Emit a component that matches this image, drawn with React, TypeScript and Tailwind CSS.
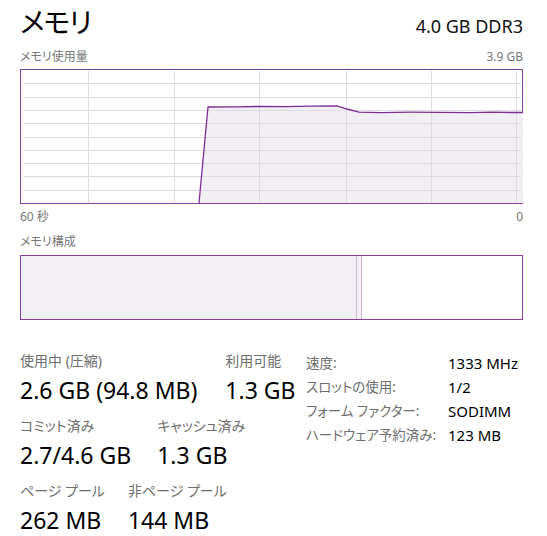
import React from 'react';

// chart inner size (inside the 1px border)
const W = 502;
const H = 133;

const vLines = [67, 153, 238, 325, 410, 495];
const hLines = [1, 2, 3, 4, 5, 6, 7, 8, 9].map((k) => Math.round((k * H) / 10) + 0.5);

const usage: [number, number][] = [
  [178, 133],
  [187, 37],
  [215, 36.8],
  [240, 36.4],
  [265, 36.6],
  [290, 36.2],
  [316, 36],
  [326, 39],
  [338, 42.2],
  [360, 42.6],
  [390, 42.2],
  [420, 42.4],
  [450, 42.6],
  [470, 42.2],
  [490, 42.5],
  [502, 42.5],
];

const UsageChart: React.FC = () => {
  const line = usage.map(([x, y]) => `${x},${y}`).join(' ');
  const fill = `${line} ${W},${H}`;
  return (
    <svg width={W} height={H} viewBox={`0 0 ${W} ${H}`} className="block">
      <polygon points={fill} fill="#f1eff4" />
      {hLines.map((y) => (
        <line key={`h${y}`} x1={2} x2={W - 2} y1={y} y2={y} stroke="#dedae2" strokeWidth={1} />
      ))}
      {vLines.map((x) => (
        <line key={`v${x}`} x1={x + 0.5} x2={x + 0.5} y1={0} y2={H} stroke="#dedae2" strokeWidth={1} />
      ))}
      <polyline points={line} fill="none" stroke="#7f2d96" strokeWidth={1.3} />
    </svg>
  );
};

const Stat: React.FC<{ label: string; value: string }> = ({ label, value }) => (
  <div className="flex flex-col">
    <div className="h-[20px] whitespace-nowrap text-[14px] leading-[20px] text-[#6e6e6e]">{label}</div>
    <div className="mt-[4px] h-[30px] whitespace-nowrap text-[23px] leading-[30px] text-black">{value}</div>
  </div>
);

const details = [
  ['速度:', '1333 MHz'],
  ['スロットの使用:', '1/2'],
  ['フォーム ファクター:', 'SODIMM'],
  ['ハードウェア予約済み:', '123 MB'],
];

export default function App() {
  return (
    <div className="w-[547px] h-[536px] overflow-hidden bg-white pl-5 pr-[24px] font-['Noto_Sans','Noto_Sans_CJK_JP',sans-serif] [font-feature-settings:'palt']">
      {/* header */}
      <div className="flex h-[44px] items-baseline justify-between">
        <div className="text-[28px] leading-[44px] tracking-[-1px] text-black">メモリ</div>
        <div className="text-[18px] leading-[44px] text-[#111]">4.0 GB DDR3</div>
      </div>

      <div className="mt-[5px] flex h-[16px] justify-between text-[12px] leading-[16px] text-[#777]">
        <span>メモリ使用量</span>
        <span>3.9 GB</span>
      </div>

      <div className="mt-[4px] h-[135px] border border-[#8b3fa0]">
        <UsageChart />
      </div>

      <div className="mt-[5px] flex h-[16px] justify-between text-[12px] leading-[16px] text-[#777]">
        <span>60 秒</span>
        <span>0</span>
      </div>

      <div className="mt-[9px] h-[16px] text-[12px] leading-[16px] text-[#777]">メモリ構成</div>

      <div className="mt-[5px] flex h-[65px] border border-[#8b3fa0]">
        <div className="w-[336px] border-r border-[#cdbcd4] bg-[#f2f0f4]" />
        <div className="w-[5px] border-r border-[#cdbcd4] bg-[#f2f0f4]" />
        <div className="flex-1" />
      </div>

      {/* stats */}
      <div className="mt-[31px] flex items-start">
        <div className="flex w-[286px] flex-col gap-[11px]">
          <div className="flex gap-[28px]">
            <Stat label="使用中 (圧縮)" value="2.6 GB (94.8 MB)" />
            <Stat label="利用可能" value="1.3 GB" />
          </div>
          <div className="flex gap-[26px]">
            <Stat label="コミット済み" value="2.7/4.6 GB" />
            <Stat label="キャッシュ済み" value="1.3 GB" />
          </div>
          <div className="flex gap-[23px]">
            <Stat label="ページ プール" value="262 MB" />
            <Stat label="非ページ プール" value="144 MB" />
          </div>
        </div>

        <div className="flex flex-col">
          {details.map(([k, v]) => (
            <div key={k} className="flex h-[24px] items-center">
              <div className="w-[142px] whitespace-nowrap text-[13.5px] leading-[24px] text-[#6e6e6e]">{k}</div>
              <div className="whitespace-nowrap text-[15px] leading-[24px] text-black">{v}</div>
            </div>
          ))}
        </div>
      </div>
    </div>
  );
}
